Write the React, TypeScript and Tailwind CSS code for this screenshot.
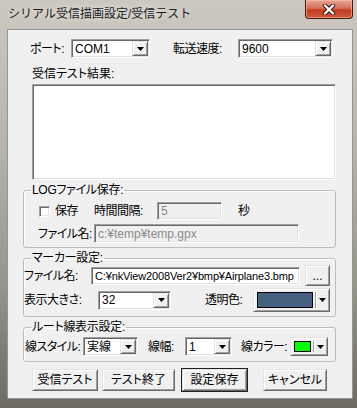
import React from "react";

const sunken =
  "border border-t-[#a0a0a0] border-l-[#a0a0a0] border-r-white border-b-white shadow-[inset_1px_1px_0_#696969,inset_-1px_-1px_0_#e3e3e3]";
const raised =
  "border border-t-[#e3e3e3] border-l-[#e3e3e3] border-r-[#696969] border-b-[#696969] shadow-[inset_1px_1px_0_#ffffff,inset_-1px_-1px_0_#a0a0a0] bg-[#f0f0f0]";

const Tri = () => (
  <svg width="7" height="4" viewBox="0 0 7 4">
    <path d="M0 0H7L3.5 4Z" fill="#000" />
  </svg>
);

const Combo = ({ value, w }: { value: string; w: string }) => (
  <div className={`${w} shrink-0 h-[19px] flex bg-white ${sunken} p-[1px]`}>
    <span className="flex-1 pl-[2px] flex items-center">{value}</span>
    <div className={`w-[16px] h-full flex items-center justify-center ${raised}`}>
      <Tri />
    </div>
  </div>
);

const Edit = ({
  value,
  w,
  h,
  disabled,
  small,
}: {
  value: string;
  w: string;
  h: string;
  disabled?: boolean;
  small?: boolean;
}) => (
  <div
    className={`${w} ${h} shrink-0 overflow-hidden flex items-center pl-[3px] ${sunken} ${
      disabled ? "bg-[#f0f0f0] text-[#8a8a8a]" : "bg-white"
    } ${small ? "text-[11px] tracking-[-0.15px]" : ""}`}
  >
    {value}
  </div>
);

const Btn = ({ label, w, def }: { label: string; w: string; def?: boolean }) => (
  <div
    className={`${w} shrink-0 h-[22px] flex items-center justify-center ${raised} ${
      def ? "outline outline-1 outline-[#202020]" : ""
    }`}
  >
    {label}
  </div>
);

const ColorBtn = ({ color, w, h }: { color: string; w: string; h: string }) => (
  <div className={`${w} ${h} shrink-0 flex items-center ${raised} pl-[3px] pr-[2px] py-[3px]`}>
    <div className="flex-1 h-full border border-black" style={{ background: color }} />
    <div className="w-[1px] h-full bg-[#a0a0a0] ml-[2px] mr-[2px] shadow-[1px_0_0_#fff]" />
    <div className="w-[9px] flex justify-center">
      <Tri />
    </div>
  </div>
);

// labels in MS UI Gothic run narrower than Noto, so tighten them a bit
const Label = ({ children, cls }: { children: React.ReactNode; cls: string }) => (
  <span className={`${cls} shrink-0 tracking-[-0.5px]`}>{children}</span>
);

const Group = ({ title, children }: { title: string; children: React.ReactNode }) => (
  <fieldset className="mt-[3px] ml-[15px] w-[313px] border border-[#b9bdc2] rounded-[3px] pb-[4px] shadow-[inset_1px_1px_0_#fff]">
    <legend className="ml-[7px] px-[1px] leading-[14px] tracking-[-0.3px]">{title}</legend>
    {children}
  </fieldset>
);

export default function App() {
  return (
    <div className="w-[357px] h-[408px] overflow-hidden whitespace-nowrap flex flex-col bg-[linear-gradient(180deg,#ccc8c0_0%,#b8b4ab_35%,#959588_70%,#6d6a62_100%)] font-['Liberation_Sans','Noto_Sans_CJK_JP',sans-serif] text-[12px] leading-[14px] text-black">
      {/* title bar */}
      <div className="h-[29px] flex items-start pl-[8px] pr-[4px]">
        <span className="pt-[7px] text-[#1a1a1a] [text-shadow:0_0_6px_#ffffff]">
          シリアル受信描画設定/受信テスト
        </span>
        <div className="ml-auto w-[48px] h-[19px] rounded-b-[4px] border border-t-0 border-[#4a1a12] bg-[linear-gradient(180deg,#e9a593_0%,#d5725c_45%,#c43c20_55%,#d0593a_100%)] shadow-[inset_0_0_0_1px_rgba(255,200,190,0.5)] flex items-center justify-center">
          <svg width="14" height="11" viewBox="0 0 14 11">
            <path d="M3 1.5L11 9.5M11 1.5L3 9.5" stroke="#3a120c" strokeWidth="4.2" strokeLinecap="round" />
            <path d="M3 1.5L11 9.5M11 1.5L3 9.5" stroke="#fff" strokeWidth="2.4" strokeLinecap="round" />
          </svg>
        </div>
      </div>

      {/* client */}
      <div className="flex-1 ml-[7px] mr-[4px] mb-[9px] bg-[#f0f0f0] border border-[#8e979f] flex flex-col [font-feature-settings:'palt']">
        <div className="mt-[9px] h-[19px] flex items-center pl-[22px]">
          <Label cls="w-[41px]">ポート:</Label>
          <Combo value="COM1" w="w-[79px]" />
          <Label cls="ml-[23px] w-[65px]">転送速度:</Label>
          <Combo value="9600" w="w-[95px]" />
        </div>

        <div className="h-[26px] pt-[6px] pl-[24px] flex items-center">受信テスト結果:</div>
        <div className={`ml-[24px] w-[304px] h-[96px] bg-white ${sunken}`} />

        <Group title="LOGファイル保存:">
          <div className="mt-[5px] h-[18px] flex items-center pl-[15px]">
            <div className={`w-[11px] h-[11px] shrink-0 bg-white ${sunken}`} />
            <Label cls="ml-[5px] w-[24px]">保存</Label>
            <Label cls="ml-[15px] w-[63px]">時間間隔:</Label>
            <Edit value="5" w="w-[65px]" h="h-[18px]" disabled />
            <Label cls="ml-[16px]">秒</Label>
          </div>
          <div className="mt-[4px] h-[19px] flex items-center pl-[14px]">
            <Label cls="w-[56px]">ファイル名:</Label>
            <Edit value="c:¥temp¥temp.gpx" w="w-[205px]" h="h-[19px]" disabled />
          </div>
        </Group>

        <Group title="マーカー設定:">
          <div className="h-[21px] flex items-center">
            <Label cls="w-[67px]">ファイル名:</Label>
            <Edit value="C:¥nkView2008Ver2¥bmp¥Airplane3.bmp" w="w-[209px]" h="h-[18px]" small />
            <div className={`ml-[5px] w-[25px] h-[21px] shrink-0 flex items-center justify-center ${raised}`}>...</div>
          </div>
          <div className="mt-[2px] h-[24px] flex items-center">
            <Label cls="w-[74px]">表示大きさ:</Label>
            <Combo value="32" w="w-[73px]" />
            <Label cls="ml-[34px] w-[48px]">透明色:</Label>
            <ColorBtn color="#46617f" w="w-[77px]" h="h-[24px]" />
          </div>
        </Group>

        <Group title="ルート線表示設定:">
          <div className="mt-[2px] h-[21px] flex items-center pl-[1px]">
            <Label cls="w-[58px]">線スタイル:</Label>
            <Combo value="実線" w="w-[55px]" />
            <Label cls="ml-[10px] w-[37px]">線幅:</Label>
            <Combo value="1" w="w-[47px]" />
            <Label cls="ml-[9px] w-[49px]">線カラー:</Label>
            <ColorBtn color="#00ff00" w="w-[38px]" h="h-[19px]" />
          </div>
        </Group>

        <div className="mt-[7px] h-[22px] flex pl-[24px]">
          <Btn label="受信テスト" w="w-[66px]" />
          <div className="ml-[4px]">
            <Btn label="テスト終了" w="w-[73px]" />
          </div>
          <div className="ml-[7px]">
            <Btn label="設定保存" w="w-[65px]" def />
          </div>
          <div className="ml-[16px]">
            <Btn label="キャンセル" w="w-[64px]" />
          </div>
        </div>
      </div>
    </div>
  );
}
